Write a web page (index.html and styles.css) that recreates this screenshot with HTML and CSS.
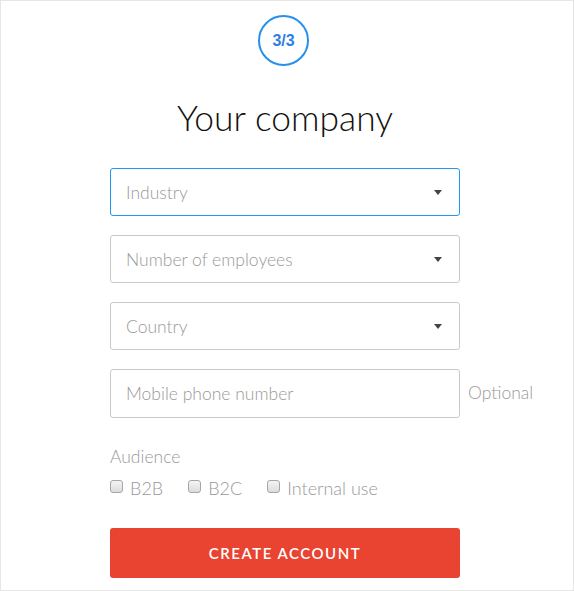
FILE: index.html
```html
<!DOCTYPE html>
<html lang="en">
<head>
<meta charset="utf-8">
<title>Your company</title>
<link rel="stylesheet" href="styles.css">
</head>
<body>
<div class="frame">
  <div class="step">3/3</div>
  <h1 class="title">Your company</h1>
  <form class="form">
    <div class="field select focused"><span class="ph">Industry</span><span class="caret"></span></div>
    <div class="field select"><span class="ph">Number of employees</span><span class="caret"></span></div>
    <div class="field select"><span class="ph">Country</span><span class="caret"></span></div>
    <div class="row">
      <div class="field"><span class="ph">Mobile phone number</span></div>
      <span class="optional">Optional</span>
    </div>
    <div class="audience">Audience</div>
    <div class="checks">
      <label class="check"><span class="box"></span>B2B</label>
      <label class="check"><span class="box"></span>B2C</label>
      <label class="check"><span class="box"></span>Internal use</label>
    </div>
    <div class="button">CREATE ACCOUNT</div>
  </form>
</div>
</body>
</html>
```
FILE: styles.css
```css
* { box-sizing: border-box; }
html, body { margin: 0; padding: 0; background: #fff; }
body { font-family: Lato, "Open Sans", Arial, sans-serif; }
.frame {
  width: 574px;
  height: 591px;
  border: 1px solid #e6e6e6;
  padding: 14px 4px 0 0;
  display: flex;
  flex-direction: column;
  align-items: center;
}
.step {
  width: 51px;
  height: 51px;
  margin-left: -3px;
  border: 2px solid #2590ee;
  border-radius: 50%;
  display: flex;
  align-items: center;
  justify-content: center;
  color: #2f7fe2;
  font-weight: 700;
  font-size: 16px;
  font-family: "Liberation Sans", Arial, sans-serif;
}
.title {
  margin: 30px 0 0;
  font-weight: 300;
  font-size: 35.4px;
  line-height: 43px;
  color: #111;
}
.form {
  margin-top: 29px;
  width: 350px;
  display: flex;
  flex-direction: column;
}
.field {
  width: 350px;
  height: 48px;
  border: 1px solid #c9c9c9;
  border-radius: 3px;
  display: flex;
  align-items: center;
  justify-content: space-between;
  padding: 0 17px 0 15px;
  margin-bottom: 19px;
  flex-shrink: 0;
}
.field.focused { border-color: #2196f3; }
.ph { color: #999; font-size: 17.5px; font-weight: 300; }
.caret {
  width: 0; height: 0;
  border-left: 4.5px solid transparent;
  border-right: 4.5px solid transparent;
  border-top: 5px solid #444;
}
.row {
  display: flex;
  align-items: center;
  width: 350px;
  overflow: visible;
}
.row .field { height: 49px; }
.optional {
  color: #999;
  font-size: 17.5px;
  font-weight: 300;
  margin-left: 8px;
  margin-top: -21px;
  white-space: nowrap;
}
.audience {
  margin-top: 10px;
  color: #999;
  font-size: 17.5px;
  font-weight: 300;
  line-height: 20px;
}
.checks {
  display: flex;
  margin-top: 11px;
}
.check {
  display: flex;
  align-items: center;
  color: #999;
  font-size: 18px;
  font-weight: 300;
  line-height: 20px;
  margin-right: 25px;
}
.box {
  width: 13px;
  height: 13px;
  border: 1px solid #a6a6a6;
  border-radius: 3px;
  background: linear-gradient(#f4f4f4, #dcdcdc);
  margin-right: 7px;
  margin-top: -4px;
}
.button {
  margin-top: 30px;
  height: 50px;
  background: #e84431;
  border-radius: 3px;
  color: #fff;
  font-weight: 600;
  font-size: 15px;
  letter-spacing: 1.5px;
  display: flex;
  align-items: center;
  justify-content: center;
}
```
